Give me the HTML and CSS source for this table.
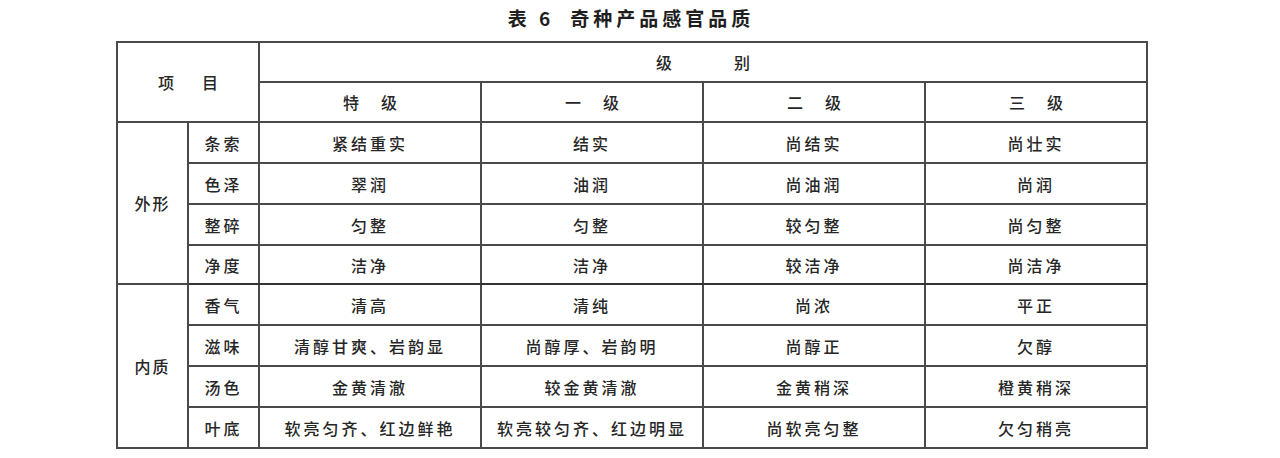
FILE: index.html
```html
<!DOCTYPE html>
<html lang="zh">
<head>
<meta charset="utf-8">
<title>表6 奇种产品感官品质</title>
<link rel="stylesheet" href="styles.css">
</head>
<body>
<div class="page">
  <h1 class="title"><span class="num">表 6</span>奇种产品感官品质</h1>
  <table class="grid">
    <colgroup>
      <col class="c-a"><col class="c-b"><col class="c-g"><col class="c-g"><col class="c-g"><col class="c-g">
    </colgroup>
    <thead>
      <tr class="h1">
        <th colspan="2" rowspan="2" class="item">项目</th>
        <th colspan="4" class="level">级别</th>
      </tr>
      <tr class="h2">
        <th class="grade">特级</th>
        <th class="grade">一级</th>
        <th class="grade">二级</th>
        <th class="grade">三级</th>
      </tr>
    </thead>
    <tbody>
      <tr><td rowspan="4" class="group">外形</td><td class="sub">条索</td><td>紧结重实</td><td>结实</td><td>尚结实</td><td>尚壮实</td></tr>
      <tr><td class="sub">色泽</td><td>翠润</td><td>油润</td><td>尚油润</td><td>尚润</td></tr>
      <tr><td class="sub">整碎</td><td>匀整</td><td>匀整</td><td>较匀整</td><td>尚匀整</td></tr>
      <tr class="last"><td class="sub">净度</td><td>洁净</td><td>洁净</td><td>较洁净</td><td>尚洁净</td></tr>
      <tr class="first"><td rowspan="4" class="group">内质</td><td class="sub">香气</td><td>清高</td><td>清纯</td><td>尚浓</td><td>平正</td></tr>
      <tr><td class="sub">滋味</td><td>清醇甘爽、岩韵显</td><td>尚醇厚、岩韵明</td><td>尚醇正</td><td>欠醇</td></tr>
      <tr><td class="sub">汤色</td><td>金黄清澈</td><td>较金黄清澈</td><td>金黄稍深</td><td>橙黄稍深</td></tr>
      <tr><td class="sub">叶底</td><td>软亮匀齐、红边鲜艳</td><td>软亮较匀齐、红边明显</td><td>尚软亮匀整</td><td>欠匀稍亮</td></tr>
    </tbody>
  </table>
</div>
</body>
</html>
```
FILE: styles.css
```css
html, body {
  margin: 0;
  padding: 0;
  background: #ffffff;
}
body {
  font-family: "Noto Sans CJK SC", "Noto Sans", sans-serif;
  color: #262626;
}
.page {
  width: 1030px;
  padding: 6px 0 0 116px;
}
.title {
  margin: 0;
  height: 35px;
  line-height: 24px;
  text-align: center;
  font-size: 19px;
  font-weight: 700;
  letter-spacing: 4px;
  color: #1e1e1e;
}
.title .num {
  margin-right: 16px;
}
.grid {
  width: 1030px;
  border-collapse: collapse;
  table-layout: fixed;
  border: 2px solid #262626;
}
.c-a { width: 71px; }
.c-b { width: 71px; }
.c-g { width: 222px; }
.grid th,
.grid td {
  border: 2px solid #4a4a4a;
  padding: 0;
  text-align: center;
  vertical-align: middle;
  font-size: 16px;
  font-weight: 500;
  letter-spacing: 3px;
  line-height: 20px;
}
.grid tr.h1 { height: 40px; }
.grid tr.h2 { height: 40px; }
.grid tbody tr { height: 41px; }
.grid tbody tr.last { height: 39px; }
.grid th.item { letter-spacing: 28px; text-indent: 28px; }
.grid th.level { letter-spacing: 62px; text-indent: 62px; }
.grid th.grade { letter-spacing: 22px; text-indent: 22px; }
.grid td.group { letter-spacing: 2px; }
.grid tr.last td { border-bottom-color: #333333; }
```
